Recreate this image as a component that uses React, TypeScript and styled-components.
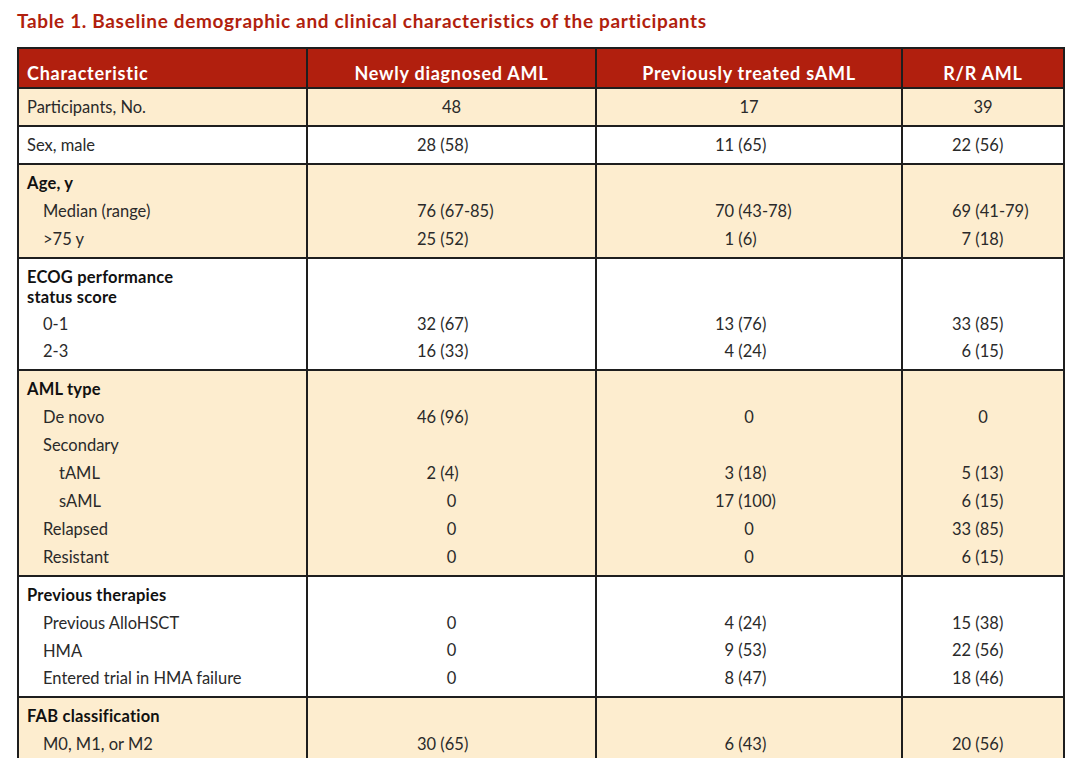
import React from "react";
import styled, { createGlobalStyle } from "styled-components";

const GlobalStyle = createGlobalStyle`
  html, body {
    margin: 0;
    padding: 0;
    background: #ffffff;
    overflow: hidden;
  }
  body {
    font-family: Lato, "Noto Sans", "Liberation Sans", sans-serif;
    color: #2a2a2a;
  }
`;

const RED = "#b11f0e";
const SHADE = "#fdedcf";
const LINE = "#1e1e1e";
const COLS = "289px 289px 306px 162px";

const Page = styled.div`
  padding: 8px 0 0 17px;
`;

const Title = styled.h1`
  margin: 0 0 14px 0;
  font-size: 19px;
  line-height: 25px;
  font-weight: 700;
  letter-spacing: 0.66px;
  color: ${RED};
`;

const Table = styled.div`
  width: 1048px;
  border-left: 2px solid ${LINE};
  border-top: 2px solid ${LINE};
  box-sizing: border-box;
`;

const HeadRow = styled.div`
  display: grid;
  grid-template-columns: ${COLS};
  background: ${RED};
`;

const HeadCell = styled.div<{ $align: "left" | "center" }>`
  box-sizing: border-box;
  border-right: 2px solid ${LINE};
  border-bottom: 2px solid ${LINE};
  padding: 14px ${(p) => (p.$align === "left" ? "0 4px 8px" : "0 4px 0")};
  text-align: ${(p) => p.$align};
  color: #ffffff;
  font-size: 18px;
  letter-spacing: 0.75px;
  line-height: 20px;
  font-weight: 700;
  white-space: nowrap;
`;

const BodyRow = styled.div<{ $shade: boolean }>`
  display: grid;
  grid-template-columns: ${COLS};
  background: ${(p) => (p.$shade ? SHADE : "#ffffff")};
`;

const Cell = styled.div`
  box-sizing: border-box;
  border-right: 2px solid ${LINE};
  border-bottom: 2px solid ${LINE};
  padding: 5px 0 3px;
  font-size: 16.5px;
  line-height: 27.9px;
  font-variant-numeric: tabular-nums;
`;

const LabelLine = styled.div<{ $level: number; $heading: boolean; $tall: boolean }>`
  padding-left: ${(p) => 8 + p.$level * 16}px;
  font-weight: ${(p) => (p.$heading ? 700 : 400)};
  letter-spacing: ${(p) => (p.$heading ? "0.2px" : "0")};
  color: ${(p) => (p.$heading ? "#111111" : "#2a2a2a")};
  white-space: pre-line;
  ${(p) =>
    p.$tall
      ? `line-height: 20px; padding-top: 3.5px; padding-bottom: 3.5px;`
      : ""}
`;

const ValueLine = styled.div<{ $indent: number; $paren: boolean; $tall: boolean }>`
  height: ${(p) => (p.$tall ? "47px" : "27.9px")};
  text-align: ${(p) => (p.$paren ? "left" : "center")};
  padding-left: ${(p) => (p.$paren ? p.$indent : 0)}px;
  white-space: nowrap;
`;

const Lead = styled.span`
  display: inline-block;
  width: 2ch;
  text-align: right;
`;

type Line = {
  label: string;
  level?: number;
  heading?: boolean;
  tall?: boolean;
  values?: [string, string, string];
};

type Group = { shade: boolean; lines: Line[] };

const groups: Group[] = [
  {
    shade: true,
    lines: [{ label: "Participants, No.", values: ["48", "17", "39"] }],
  },
  {
    shade: false,
    lines: [{ label: "Sex, male", values: ["28 (58)", "11 (65)", "22 (56)"] }],
  },
  {
    shade: true,
    lines: [
      { label: "Age, y", heading: true },
      { label: "Median (range)", level: 1, values: ["76 (67-85)", "70 (43-78)", "69 (41-79)"] },
      { label: ">75 y", level: 1, values: ["25 (52)", "1 (6)", "7 (18)"] },
    ],
  },
  {
    shade: false,
    lines: [
      { label: "ECOG performance\nstatus score", heading: true, tall: true },
      { label: "0-1", level: 1, values: ["32 (67)", "13 (76)", "33 (85)"] },
      { label: "2-3", level: 1, values: ["16 (33)", "4 (24)", "6 (15)"] },
    ],
  },
  {
    shade: true,
    lines: [
      { label: "AML type", heading: true },
      { label: "De novo", level: 1, values: ["46 (96)", "0", "0"] },
      { label: "Secondary", level: 1 },
      { label: "tAML", level: 2, values: ["2 (4)", "3 (18)", "5 (13)"] },
      { label: "sAML", level: 2, values: ["0", "17 (100)", "6 (15)"] },
      { label: "Relapsed", level: 1, values: ["0", "0", "33 (85)"] },
      { label: "Resistant", level: 1, values: ["0", "0", "6 (15)"] },
    ],
  },
  {
    shade: false,
    lines: [
      { label: "Previous therapies", heading: true },
      { label: "Previous AlloHSCT", level: 1, values: ["0", "4 (24)", "15 (38)"] },
      { label: "HMA", level: 1, values: ["0", "9 (53)", "22 (56)"] },
      { label: "Entered trial in HMA failure", level: 1, values: ["0", "8 (47)", "18 (46)"] },
    ],
  },
  {
    shade: true,
    lines: [
      { label: "FAB classification", heading: true },
      { label: "M0, M1, or M2", level: 1, values: ["30 (65)", "6 (43)", "20 (56)"] },
    ],
  },
];

const indents = [109, 118, 49];

function Value({ text, indent, tall }: { text: string; indent: number; tall: boolean }) {
  const idx = text.indexOf(" (");
  if (idx < 0) {
    return (
      <ValueLine $indent={indent} $paren={false} $tall={tall}>
        {text}
      </ValueLine>
    );
  }
  return (
    <ValueLine $indent={indent} $paren={true} $tall={tall}>
      <Lead>{text.slice(0, idx)}</Lead>
      {text.slice(idx)}
    </ValueLine>
  );
}

export default function App() {
  return (
    <>
      <GlobalStyle />
      <Page>
        <Title>Table 1. Baseline demographic and clinical characteristics of the participants</Title>
        <Table>
          <HeadRow>
            <HeadCell $align="left">Characteristic</HeadCell>
            <HeadCell $align="center">Newly diagnosed AML</HeadCell>
            <HeadCell $align="center">Previously treated sAML</HeadCell>
            <HeadCell $align="center">R/R AML</HeadCell>
          </HeadRow>
          {groups.map((g, gi) => (
            <BodyRow key={gi} $shade={g.shade}>
              <Cell>
                {g.lines.map((l, li) => (
                  <LabelLine
                    key={li}
                    $level={l.level ?? 0}
                    $heading={!!l.heading}
                    $tall={!!l.tall}
                  >
                    {l.label}
                  </LabelLine>
                ))}
              </Cell>
              {[0, 1, 2].map((ci) => (
                <Cell key={ci}>
                  {g.lines.map((l, li) => (
                    <Value
                      key={li}
                      text={l.values ? l.values[ci] : ""}
                      indent={indents[ci]}
                      tall={!!l.tall}
                    />
                  ))}
                </Cell>
              ))}
            </BodyRow>
          ))}
        </Table>
      </Page>
    </>
  );
}
